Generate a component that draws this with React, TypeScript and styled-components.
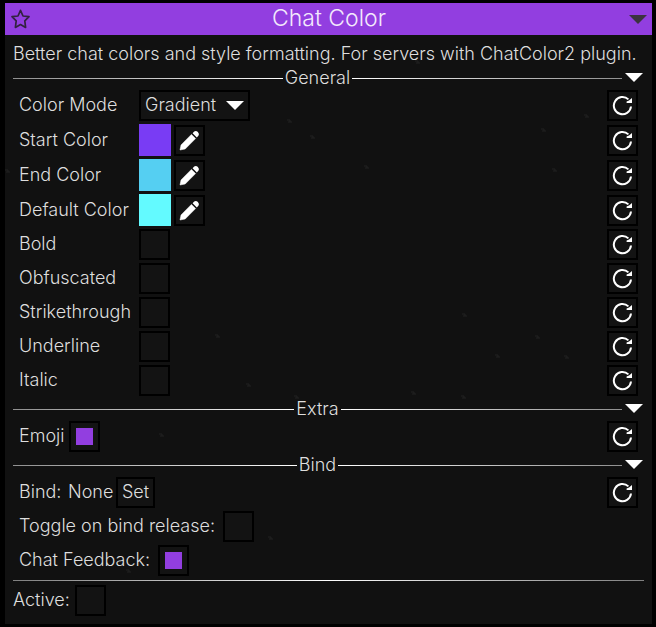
import React, { useState } from "react";
import styled, { createGlobalStyle } from "styled-components";

const GlobalStyle = createGlobalStyle`
  *, *::before, *::after { box-sizing: border-box; }
  body {
    margin: 0;
    background: #000;
    color: #dedede;
    font-family: Inter, "Open Sans", sans-serif;
    font-size: 18px;
    font-weight: 300;
    line-height: 19px;
  }
`;

const Frame = styled.div`
  position: relative;
  padding: 3px 4px 3px 5px;
`;

const Panel = styled.main`
  background: #111;
`;

const Dust = styled.svg`
  position: absolute;
  top: 0;
  left: 0;
  pointer-events: none;
`;

const TitleBar = styled.header`
  display: grid;
  grid-template-columns: 20px 1fr 20px;
  align-items: center;
  height: 32px;
  padding: 0 4px 0 5px;
  background: #923ee0;
`;

const Title = styled.h1`
  margin: 0;
  padding-bottom: 2px;
  font-size: 23px;
  font-weight: 300;
  line-height: 24px;
  text-align: center;
  color: #f3e9fc;
`;

const IconButton = styled.button`
  display: flex;
  align-items: center;
  justify-content: center;
  padding: 0;
  border: 0;
  background: none;
  color: inherit;
`;

const Body = styled.div`
  display: flex;
  flex-direction: column;
  gap: 3px;
  padding: 8px;
`;

const Description = styled.p`
  margin: 0;
  height: 22px;
  line-height: 22px;
  white-space: nowrap;
`;

const SectionHead = styled.div`
  display: flex;
  align-items: center;
  height: 19px;
  padding-top: 2px;
`;

const SectionTitle = styled.h2`
  margin: 0;
  padding: 0 2px 3px;
  font-size: 18px;
  font-weight: 300;
  line-height: 19px;
`;

const Line = styled.span<{ $side: "left" | "right" }>`
  flex: 1;
  height: 1px;
  background: linear-gradient(to ${(p) => p.$side}, #fff, #909090);
`;

const SectionToggle = styled(IconButton)`
  width: 18px;
  margin: 0 1px 3px 3px;
`;

const Divider = styled.hr`
  width: 100%;
  height: 1px;
  margin: 1px 0;
  border: 0;
  background: linear-gradient(to right, #808080, #fff 50%, #808080);
`;

const Row = styled.div<{ $flush?: boolean }>`
  display: flex;
  align-items: flex-end;
  gap: 3px;
  padding: 0 ${(p) => (p.$flush ? 0 : 6)}px;
`;

const Label = styled.label<{ $width: number }>`
  align-self: center;
  flex: none;
  width: ${(p) => p.$width}px;
  padding-bottom: 2px;
  white-space: nowrap;
`;

const BoxButton = styled.button`
  display: flex;
  align-items: center;
  justify-content: center;
  min-width: 31px;
  height: 31px;
  padding: 0 4px 2px;
  border: 2px solid #000;
  background: #131313;
  color: #dedede;
  font: inherit;
`;

const ToolButton = styled(BoxButton)`
  padding: 0;
  color: #fff;
`;

const ResetButton = styled(ToolButton)`
  margin-left: auto;
`;

const Checkbox = styled.input.attrs({ type: "checkbox" })`
  appearance: none;
  flex: none;
  display: grid;
  place-content: center;
  width: 31px;
  height: 31px;
  margin: 0;
  border: 2px solid #000;
  background: #131313;

  &:checked::before {
    content: "";
    width: 17px;
    height: 17px;
    background: #923ee0;
  }
`;

const Swatch = styled.span<{ $color: string }>`
  width: 32px;
  height: 32px;
  background: ${(p) => p.$color};
`;

const SelectBox = styled.div`
  display: grid;
  align-items: center;
  width: 111px;
  height: 31px;
  border: 2px solid #000;
  background: #131313;

  > * {
    grid-area: 1 / 1;
  }

  > svg {
    justify-self: end;
    margin-right: 4px;
    pointer-events: none;
  }
`;

const Select = styled.select`
  appearance: none;
  width: 100%;
  height: 27px;
  padding: 0 24px 2px 4px;
  border: 0;
  background: none;
  color: #dedede;
  font: inherit;
`;

const Star = () => (
  <svg width="20" height="20" viewBox="0 0 20 20" fill="none" stroke="#32223f" strokeWidth="1.7" strokeLinejoin="round">
    <path d="M10.5 1.4 13 7 19 7.6 14.8 11.8 15.6 18.4 10.5 15.6 5.4 18.4 6.2 11.8 2 7.6 8 7Z" />
  </svg>
);

const Triangle = ({ color = "#fff" }: { color?: string }) => (
  <svg width="18" height="9" viewBox="0 0 18 9" fill={color}>
    <path d="M0 0H18L9 9Z" />
  </svg>
);

const Pencil = () => (
  <svg width="21" height="21" viewBox="0 0 21 21" fill="currentColor">
    <path d="M1 20 2 15 12.4 4.4 16.6 8.6 6.2 19Z" strokeLinejoin="round" stroke="currentColor" strokeWidth=".5" />
    <path d="M13.6 3.2 15.2 1.6Q17 .2 18.9 2.1 20.8 4 19.4 5.8L17.8 7.4Z" />
  </svg>
);

const ResetIcon = () => (
  <svg width="21" height="21" viewBox="0 0 21 21">
    <path d="M19 11.5A8.6 8.6 0 1 1 16.4 4.4" fill="none" stroke="currentColor" strokeWidth="2" />
    <path d="M20 3V8H14.6V6.4L17 5.6Z" fill="currentColor" />
  </svg>
);

const SPECKS = [
  [289, 121], [312, 137], [366, 167], [543, 130], [586, 116], [554, 170], [7, 171], [417, 62],
  [464, 315], [537, 337], [497, 356], [566, 357], [217, 336], [248, 385], [296, 397], [413, 393],
  [463, 397], [161, 435], [270, 538], [128, 571],
];

const Specks = () => (
  <Dust width="100%" height="100%" fill="none" stroke="#222" aria-hidden="true">
    {SPECKS.map(([x, y]) => (
      <path key={`${x}-${y}`} d={`M${x - 2} ${y - 1}h3v2h2m-4 0h2`} />
    ))}
  </Dust>
);

const Reset = ({ name }: { name: string }) => (
  <ResetButton type="button" aria-label={`Reset ${name}`}>
    <ResetIcon />
  </ResetButton>
);

const Section = ({ title }: { title: string }) => (
  <SectionHead>
    <Line $side="left" />
    <SectionTitle>{title}</SectionTitle>
    <Line $side="right" />
    <SectionToggle type="button" aria-label={`Collapse ${title}`}>
      <Triangle />
    </SectionToggle>
  </SectionHead>
);

type CheckRowProps = { id: string; label: string; width: number; on?: boolean; reset?: boolean; flush?: boolean };

const CheckRow = ({ id, label, width, on = false, reset = false, flush }: CheckRowProps) => {
  const [checked, setChecked] = useState(on);
  return (
    <Row $flush={flush}>
      <Label htmlFor={id} $width={width}>{label}</Label>
      <Checkbox id={id} checked={checked} onChange={(e) => setChecked(e.target.checked)} />
      {reset && <Reset name={label} />}
    </Row>
  );
};

const COLORS = [
  { id: "start", label: "Start Color", color: "#793cf4" },
  { id: "end", label: "End Color", color: "#55cff2" },
  { id: "default", label: "Default Color", color: "#63faff" },
];

const STYLES = ["Bold", "Obfuscated", "Strikethrough", "Underline", "Italic"];

export default function App() {
  return (
    <>
      <GlobalStyle />
      <Frame>
        <Panel>
          <TitleBar>
            <IconButton type="button" aria-label="Favorite"><Star /></IconButton>
            <Title>Chat Color</Title>
            <IconButton type="button" aria-label="Collapse"><Triangle color="#3b333f" /></IconButton>
          </TitleBar>
          <Body>
            <Description>
              Better chat colors and style formatting. For servers with ChatColor2 plugin.
            </Description>
            <Section title="General" />
            <Row>
              <Label htmlFor="mode" $width={117}>Color Mode</Label>
              <SelectBox>
                <Select id="mode" defaultValue="Gradient">
                  <option>Gradient</option>
                </Select>
                <Triangle />
              </SelectBox>
              <Reset name="Color Mode" />
            </Row>
            {COLORS.map((c) => (
              <Row key={c.id}>
                <Label htmlFor={c.id} $width={117}>{c.label}</Label>
                <Swatch $color={c.color} />
                <ToolButton id={c.id} type="button" aria-label={`Edit ${c.label}`}><Pencil /></ToolButton>
                <Reset name={c.label} />
              </Row>
            ))}
            {STYLES.map((s) => (
              <CheckRow key={s} id={s.toLowerCase()} label={s} width={117} reset />
            ))}
            <Section title="Extra" />
            <CheckRow id="emoji" label="Emoji" width={47} on reset />
            <Section title="Bind" />
            <Row>
              <Label as="span" $width={46}>Bind:</Label>
              <Label as="span" $width={45}>None</Label>
              <BoxButton type="button">Set</BoxButton>
              <Reset name="Bind" />
            </Row>
            <CheckRow id="release" label="Toggle on bind release:" width={201} />
            <CheckRow id="feedback" label="Chat Feedback:" width={136} on />
            <Divider />
            <CheckRow id="active" label="Active:" width={59} flush />
          </Body>
        </Panel>
        <Specks />
      </Frame>
    </>
  );
}
